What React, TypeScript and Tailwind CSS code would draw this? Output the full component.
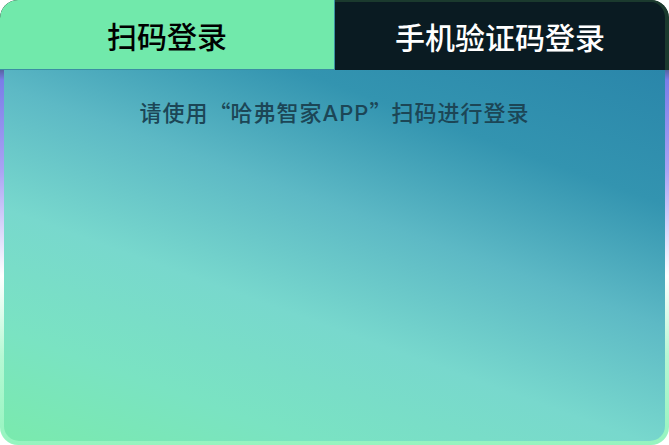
const cjk = { fontFamily: '"Noto Sans CJK SC", "Noto Sans", sans-serif' }

export default function App() {
  return (
    <div className="w-[669px] h-[445px] bg-white" style={cjk}>
      {/* Card frame: the gradient shows through as the side/bottom border */}
      <div className="flex h-full flex-col overflow-hidden rounded-[18px] bg-[linear-gradient(180deg,#1c3a2e_0%,#1c3a2e_12%,#7a7ee8_18%,#a9a2f3_38%,#ffffff_62%,#b6f8d4_80%,#95f4bf_100%)]">
        {/* Tabs */}
        <div className="flex h-[70px] shrink-0">
          <div className="flex w-[335px] items-center justify-center rounded-tl-[18px] border-r border-b border-[#3b8fa3] bg-[#71e9ab]">
            <span className="text-[30px] font-medium leading-none text-black">扫码登录</span>
          </div>
          <div className="flex flex-1 items-center justify-center rounded-tr-[18px] border-t-[2px] border-r-[4px] border-[#1b3a2e] bg-[#0a1b22]">
            <span className="text-[30px] font-medium leading-none text-white">手机验证码登录</span>
          </div>
        </div>

        {/* Body */}
        <div className="mx-[4px] mb-[4px] flex flex-1 flex-col items-center rounded-b-[15px] bg-[linear-gradient(200deg,#2a86aa_0%,#3394b0_22%,#5db9c5_42%,#78d8cd_62%,#7ae3c2_82%,#7aeaad_100%)] pt-[26px]">
          <p className="text-[22px] font-medium leading-[30px] tracking-[1px] text-[#1c4656]">
            请使用<span className="inline-block w-[22px] text-right">“</span>哈弗智家<span className="font-['Inter',sans-serif]">APP</span><span className="inline-block w-[22px] text-left">”</span>扫码进行登录
          </p>
        </div>
      </div>
    </div>
  )
}
